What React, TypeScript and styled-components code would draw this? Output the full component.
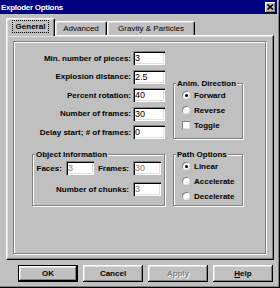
import React from "react";
import styled, { createGlobalStyle } from "styled-components";

const GlobalStyle = createGlobalStyle`
  html, body {
    margin: 0;
    padding: 0;
    background: #c0c0c0;
  }
  body {
    font-family: "Liberation Sans", Arial, sans-serif;
  }
  * {
    box-sizing: border-box;
  }
`;

const Window = styled.div`
  width: 280px;
  height: 288px;
  background: #c0c0c0;
  border-right: 1px solid #000;
  border-bottom: 1px solid #000;
  box-shadow: inset -1px -1px 0 #808080;
  padding: 0 2px 2px 0;
  display: flex;
  flex-direction: column;
  font-size: 8px;
  color: #000;
`;

const TitleBar = styled.div`
  height: 14px;
  background: #000080;
  display: flex;
  align-items: center;
  justify-content: space-between;
  padding: 0 1px 0 1px;
`;

const TitleText = styled.span`
  color: #fff;
  font-weight: bold;
  font-size: 8px;
  letter-spacing: -0.3px;
`;

const CloseButton = styled.div`
  width: 11px;
  height: 11px;
  background: #c0c0c0;
  box-shadow: inset -1px -1px 0 #000, inset 1px 1px 0 #fff, inset -2px -2px 0 #808080;
  display: flex;
  align-items: center;
  justify-content: center;
`;

const Body = styled.div`
  flex: 1;
  display: flex;
  flex-direction: column;
  padding: 4px 3px 0 6px;
`;

const TabStrip = styled.div`
  height: 17px;
  display: flex;
  align-items: flex-end;
  position: relative;
  z-index: 1;
`;

const Tab = styled.div<{ $active?: boolean; $width: number }>`
  width: ${(p) => p.$width}px;
  height: ${(p) => (p.$active ? 18 : 14)}px;
  margin-bottom: ${(p) => (p.$active ? -1 : 0)}px;
  background: #c0c0c0;
  border-top: 1px solid #fff;
  border-left: 1px solid #fff;
  border-right: 1px solid #000;
  border-radius: 2px 2px 0 0;
  box-shadow: inset -1px 0 0 #808080, inset 1px 1px 0 #dfdfdf;
  display: flex;
  align-items: center;
  justify-content: center;
  padding-bottom: ${(p) => (p.$active ? 2 : 0)}px;
  font-size: 8px;
  font-weight: ${(p) => (p.$active ? "bold" : "normal")};
`;

const FocusLabel = styled.span`
  outline: 1px dotted #000;
  padding: 1px 3px;
`;

const Panel = styled.div`
  height: 225px;
  display: flex;
  border-top: 1px solid #fff;
  border-left: 1px solid #fff;
  border-right: 1px solid #000;
  border-bottom: 1px solid #000;
  box-shadow: inset -1px -1px 0 #808080, inset 1px 1px 0 #dfdfdf;
  padding: 5px 7px 5px 6px;
`;

const InnerFrame = styled.div`
  flex: 1;
  border: 1px solid #808080;
  box-shadow: inset 1px 1px 0 #fff, 1px 1px 0 #fff;
  display: grid;
  grid-template-columns: 133px 70px;
  grid-template-rows: auto auto;
  column-gap: 8px;
  row-gap: 11px;
  align-content: start;
  padding: 9px 0 0 18px;
`;

const FormRows = styled.div`
  display: flex;
  flex-direction: column;
  gap: 4.5px;
`;

const FieldRow = styled.div<{ $gap?: number }>`
  display: flex;
  align-items: center;
  justify-content: flex-end;
  gap: ${(p) => p.$gap ?? 2}px;
`;

const Label = styled.label`
  font-size: 8px;
  font-weight: bold;
  white-space: nowrap;
`;

const TextBox = styled.input<{ $width?: number }>`
  width: ${(p) => p.$width ?? 32}px;
  height: 14px;
  margin: 0;
  padding: 0 0 0 2px;
  border: none;
  outline: none;
  background: #fff;
  box-shadow: inset 1px 1px 0 #808080, inset 2px 2px 0 #000, inset -1px -1px 0 #fff, inset -2px -2px 0 #dfdfdf;
  font-family: "Liberation Sans", Arial, sans-serif;
  font-size: 9px;
  color: #000;
  &:disabled {
    color: #808080;
    -webkit-text-fill-color: #808080;
    background: #fff;
    opacity: 1;
  }
`;

const GroupBox = styled.div<{ $top: number }>`
  position: relative;
  margin-top: ${(p) => p.$top}px;
  border: 1px solid #808080;
  box-shadow: inset 1px 1px 0 #fff, 1px 1px 0 #fff;
`;

const GroupTitle = styled.span`
  position: absolute;
  top: -5px;
  left: 2px;
  padding: 0 1px;
  line-height: 9px;
  background: #c0c0c0;
  font-size: 8px;
  font-weight: bold;
  white-space: nowrap;
`;

const OptionList = styled.div`
  display: flex;
  flex-direction: column;
  gap: 3px;
  padding: 5px 0 3px 8px;
`;

const InfoRows = styled.div`
  display: flex;
  flex-direction: column;
  gap: 7px;
  padding: 6px 3px 9px 0;
`;

const Option = styled.div`
  height: 12px;
  display: flex;
  align-items: center;
  gap: 4px;
  font-size: 8px;
  font-weight: bold;
`;

const Radio = styled.span<{ $checked?: boolean }>`
  width: 8px;
  height: 8px;
  border-radius: 50%;
  background: #fff;
  box-shadow: inset 1px 1px 0 #808080, inset -1px -1px 0 #dfdfdf;
  display: flex;
  align-items: center;
  justify-content: center;
  &::after {
    content: "";
    width: 3px;
    height: 3px;
    border-radius: 50%;
    background: ${(p) => (p.$checked ? "#000" : "transparent")};
  }
`;

const CheckBox = styled.span`
  width: 8px;
  height: 8px;
  background: #fff;
  box-shadow: inset 1px 1px 0 #808080, inset -1px -1px 0 #dfdfdf;
`;

const ButtonRow = styled.div`
  display: flex;
  gap: 5px;
  margin-top: 5px;
  padding-left: 12px;
`;

const Button = styled.button<{ $default?: boolean }>`
  width: 60px;
  height: 17px;
  margin: 0;
  padding: 0;
  background: #c0c0c0;
  border: ${(p) => (p.$default ? "1px solid #000" : "none")};
  box-shadow: inset -1px -1px 0 #000, inset 1px 1px 0 #fff, inset -2px -2px 0 #808080, inset 2px 2px 0 #dfdfdf;
  font-family: "Liberation Sans", Arial, sans-serif;
  font-size: 8px;
  font-weight: bold;
  color: #000;
  &:disabled {
    color: #808080;
    text-shadow: 1px 1px 0 #fff;
  }
`;

const settings = [
  { label: "Min. number of pieces:", value: "3" },
  { label: "Explosion distance:", value: "2.5" },
  { label: "Percent rotation:", value: "40" },
  { label: "Number of frames:", value: "30" },
  { label: "Delay start; # of frames:", value: "0" },
];

export default function App() {
  return (
    <>
      <GlobalStyle />
      <Window>
        <TitleBar>
          <TitleText>Exploder Options</TitleText>
          <CloseButton>
            <svg width="7" height="6" viewBox="0 0 7 6">
              <path d="M0.5 0.5 L6 5.5 M6 0.5 L0.5 5.5" stroke="#000" strokeWidth="1.6" />
            </svg>
          </CloseButton>
        </TitleBar>
        <Body>
          <TabStrip>
            <Tab $active $width={49}>
              <FocusLabel>General</FocusLabel>
            </Tab>
            <Tab $width={52}>Advanced</Tab>
            <Tab $width={88}>Gravity &amp; Particles</Tab>
          </TabStrip>
          <Panel>
            <InnerFrame>
              <FormRows>
                {settings.map((s) => (
                  <FieldRow key={s.label}>
                    <Label>{s.label}</Label>
                    <TextBox defaultValue={s.value} />
                  </FieldRow>
                ))}
              </FormRows>
              <GroupBox $top={32}>
                <GroupTitle>Anim. Direction</GroupTitle>
                <OptionList>
                  <Option>
                    <Radio $checked />
                    Forward
                  </Option>
                  <Option>
                    <Radio />
                    Reverse
                  </Option>
                  <Option>
                    <CheckBox />
                    Toggle
                  </Option>
                </OptionList>
              </GroupBox>
              <GroupBox $top={4}>
                <GroupTitle>Object Information</GroupTitle>
                <InfoRows>
                  <FieldRow $gap={4}>
                    <Label>Faces:</Label>
                    <TextBox $width={28} defaultValue="3" disabled />
                    <Label>Frames:</Label>
                    <TextBox $width={28} defaultValue="30" disabled />
                  </FieldRow>
                  <FieldRow $gap={4}>
                    <Label>Number of chunks:</Label>
                    <TextBox $width={28} defaultValue="3" disabled />
                  </FieldRow>
                </InfoRows>
              </GroupBox>
              <GroupBox $top={4}>
                <GroupTitle>Path Options</GroupTitle>
                <OptionList>
                  <Option>
                    <Radio $checked />
                    Linear
                  </Option>
                  <Option>
                    <Radio />
                    Accelerate
                  </Option>
                  <Option>
                    <Radio />
                    Decelerate
                  </Option>
                </OptionList>
              </GroupBox>
            </InnerFrame>
          </Panel>
          <ButtonRow>
            <Button $default>OK</Button>
            <Button>Cancel</Button>
            <Button disabled>Apply</Button>
            <Button>
              <u>H</u>elp
            </Button>
          </ButtonRow>
        </Body>
      </Window>
    </>
  );
}
